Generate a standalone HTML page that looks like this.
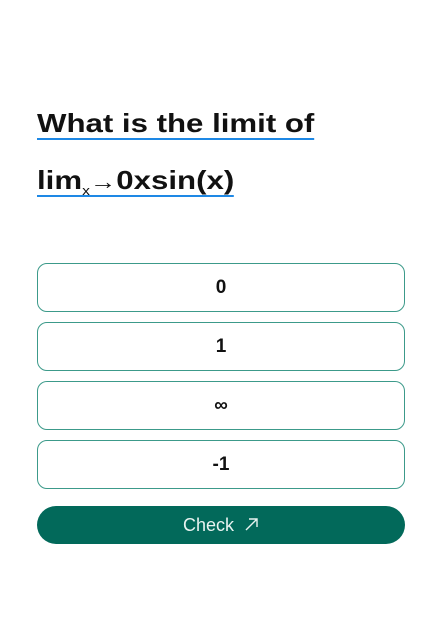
<!DOCTYPE html>
<html><head><style>
body{margin:0;width:443px;height:641px;background:#fff;font-family:"Liberation Sans",sans-serif;position:relative;overflow:hidden}
.h{position:absolute;left:37px;font-size:26px;font-weight:bold;color:#111;line-height:30px;letter-spacing:0px;transform:scaleX(1.2);transform-origin:left}
.h span.u{border-bottom:2px solid #1e88e5}
.o{position:absolute;left:37px;width:366px;height:47px;border:1px solid #3c9a8a;border-radius:10px;text-align:center;line-height:47px;font-weight:bold;font-size:19px;color:#111}
.c{position:absolute;left:37px;top:506px;width:368px;height:38px;border-radius:19px;background:#02695a;color:#e8f3f0;text-align:center;line-height:38px;font-size:18px}
</style></head><body>
<div class="h" style="top:108px"><span class="u">What is the limit of</span></div>
<div class="h" style="top:165px"><span class="u">lim<sub style="font-size:13px;vertical-align:-6px;font-weight:normal">x</sub><span style="font-size:22px">→</span>0xsin(x)</span></div>
<div class="o" style="top:263px">0</div>
<div class="o" style="top:322px">1</div>
<div class="o" style="top:381px">∞</div>
<div class="o" style="top:440px">-1</div>
<div class="c">Check &nbsp;<svg width="15" height="15" viewBox="0 0 15 15" style="vertical-align:-1px"><path d="M2 13L13 2M5 2H13V10" stroke="#e8f3f0" stroke-width="1.4" fill="none"/></svg></div>
</body></html>
